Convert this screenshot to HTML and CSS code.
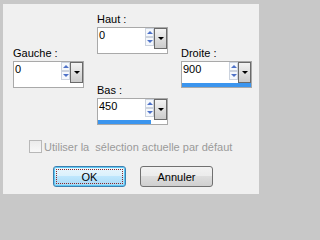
FILE: index.html
```html
<!DOCTYPE html>
<html lang="fr">
<head>
<meta charset="utf-8">
<title>Marges</title>
<link rel="stylesheet" href="styles.css">
</head>
<body>
<div class="dialog">
  <div class="fields">
    <div class="col col-side">
      <div class="label">Gauche :</div>
      <div class="spin">
        <div class="spin-row">
          <div class="value">0</div>
          <div class="arrows"><span class="up"></span><span class="down"></span></div>
          <div class="drop"></div>
        </div>
        <div class="track"><div class="fill" style="width:0%"></div></div>
      </div>
    </div>
    <div class="col col-mid">
      <div class="group">
        <div class="label">Haut :</div>
        <div class="spin">
          <div class="spin-row">
            <div class="value">0</div>
            <div class="arrows"><span class="up"></span><span class="down"></span></div>
            <div class="drop"></div>
          </div>
          <div class="track"><div class="fill" style="width:0%"></div></div>
        </div>
      </div>
      <div class="group">
        <div class="label">Bas :</div>
        <div class="spin">
          <div class="spin-row">
            <div class="value">450</div>
            <div class="arrows"><span class="up"></span><span class="down"></span></div>
            <div class="drop"></div>
          </div>
          <div class="track"><div class="fill" style="width:77%"></div></div>
        </div>
      </div>
    </div>
    <div class="col col-side">
      <div class="label">Droite :</div>
      <div class="spin">
        <div class="spin-row">
          <div class="value">900</div>
          <div class="arrows"><span class="up"></span><span class="down"></span></div>
          <div class="drop"></div>
        </div>
        <div class="track"><div class="fill" style="width:100%"></div></div>
      </div>
    </div>
  </div>
  <div class="check"><span class="cbox"></span><span class="check-text">Utiliser la  sélection actuelle par défaut</span></div>
  <div class="buttons">
    <button class="btn btn-ok"><span class="focus">OK</span></button>
    <button class="btn">Annuler</button>
  </div>
</div>
</body>
</html>
```
FILE: styles.css
```css
* { box-sizing: border-box; }
html, body { margin: 0; }
body {
  width: 264px;
  height: 200px;
  padding: 4px 0 0 3px;
  background: #c8c8c8;
  font-family: "Liberation Sans", Arial, sans-serif;
  font-size: 11px;
  color: #000;
  overflow: hidden;
}
.dialog {
  width: 256px;
  height: 190px;
  background: #f0f0f0;
  padding: 9px 0 0 10px;
}
.fields { display: flex; gap: 13px; }
.col { width: 71px; display: flex; flex-direction: column; }
.col-side { padding-top: 34px; }
.col-mid { gap: 30px; }
.group { display: flex; flex-direction: column; }
.label {
  height: 13px;
  line-height: 13px;
  margin-bottom: 1px;
  white-space: nowrap;
}
.spin {
  width: 71px;
  height: 27px;
  border: 1px solid #a9a9a9;
  background: #fff;
  display: flex;
  flex-direction: column;
}
.spin-row { display: flex; height: 21px; }
.value { flex: 1; padding: 1px 0 0 1px; line-height: 13px; }
.arrows { width: 9px; display: flex; flex-direction: column; }
.arrows span {
  height: 9px;
  border: 1px solid #ccd3de;
  background: #f5f8fc;
  display: flex;
  align-items: center;
  justify-content: center;
}
.up::after {
  content: "";
  border-left: 3px solid transparent;
  border-right: 3px solid transparent;
  border-bottom: 3px solid #4f72c8;
}
.down::after {
  content: "";
  border-left: 3px solid transparent;
  border-right: 3px solid transparent;
  border-top: 3px solid #4f72c8;
}
.drop {
  width: 13px;
  height: 21px;
  border: 1px solid #6a6a6a;
  background: linear-gradient(#f3f3f3, #cbcbcb);
  display: flex;
  align-items: center;
  justify-content: center;
}
.drop::after {
  content: "";
  border-left: 3px solid transparent;
  border-right: 3px solid transparent;
  border-top: 3px solid #000;
}
.track { height: 4px; }
.fill { height: 100%; background: #3b95ee; }
.check {
  display: flex;
  align-items: center;
  height: 13px;
  margin: 15px 0 0 16px;
  color: #9a9a9a;
  white-space: pre;
}
.cbox {
  width: 13px;
  height: 13px;
  border: 1px solid #b8b8b8;
  background: linear-gradient(#ebebeb, #f8f8f8);
  margin-right: 2px;
}
.buttons { display: flex; gap: 14px; margin: 13px 0 0 40px; }
.btn {
  width: 73px;
  height: 21px;
  padding: 0;
  font: inherit;
  color: #000;
  border: 1px solid #707070;
  border-radius: 3px;
  background: linear-gradient(#f2f2f2 0%, #ebebeb 50%, #dddddd 50%, #cfcfcf 100%);
}
.btn-ok {
  padding: 2px;
  border-color: #3c7fb1;
  box-shadow: inset 0 0 0 1px #5fc8f2;
  background: linear-gradient(#eaf6fd 0%, #d9f0fc 50%, #bee6fd 50%, #a7d9f5 100%);
}
.focus {
  display: flex;
  align-items: center;
  justify-content: center;
  height: 100%;
  border: 1px dotted #8a2a2a;
}
```
